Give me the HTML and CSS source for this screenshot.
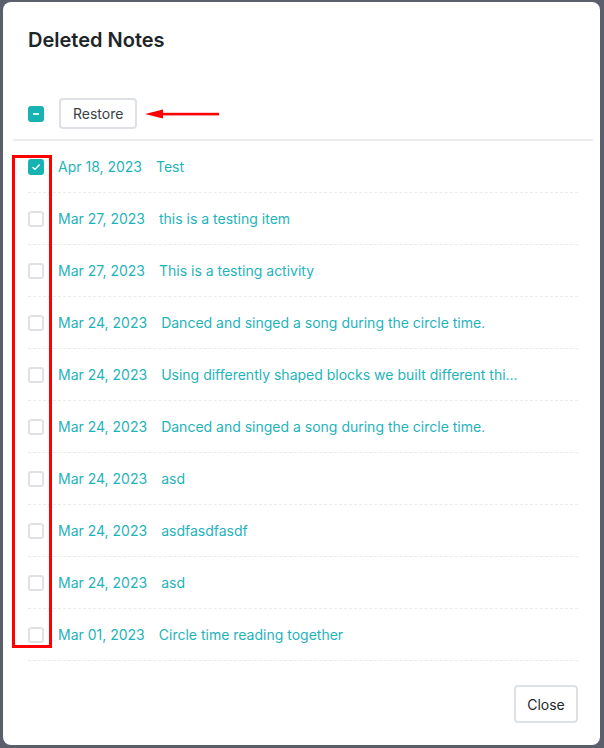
FILE: index.html
```html
<!DOCTYPE html>
<html lang="en">
<head>
    <meta charset="UTF-8">
    <meta name="viewport" content="width=device-width, initial-scale=1.0">
    <title>Deleted Notes</title>
    <link rel="stylesheet" href="styles.css">
</head>
<body>
    <div class="modal">
        <h2 class="modal-title">Deleted Notes</h2>

        <div class="toolbar">
            <span class="check check-partial"><span class="dash"></span></span>
            <button class="btn">Restore</button>
            <!-- callout arrow -->
            <svg class="arrow" width="76" height="10" viewBox="0 0 76 10">
                <polygon points="0,5 18,0.5 18,9.5" fill="#f00"/>
                <rect x="16" y="3.8" width="58" height="2.6" fill="#f00"/>
            </svg>
        </div>

        <div class="divider"></div>

        <ul class="notes">
            <li class="note">
                <span class="check check-on">
                    <svg width="10" height="8" viewBox="0 0 10 8"><path d="M1.5 4.2 L4 6.4 L8.6 1.6" fill="none" stroke="#fff" stroke-width="1.4"/></svg>
                </span>
                <span class="date">Apr 18, 2023</span>
                <span class="text">Test</span>
            </li>
            <li class="note">
                <span class="check"></span>
                <span class="date">Mar 27, 2023</span>
                <span class="text">this is a testing item</span>
            </li>
            <li class="note">
                <span class="check"></span>
                <span class="date">Mar 27, 2023</span>
                <span class="text">This is a testing activity</span>
            </li>
            <li class="note">
                <span class="check"></span>
                <span class="date">Mar 24, 2023</span>
                <span class="text">Danced and singed a song during the circle time.</span>
            </li>
            <li class="note">
                <span class="check"></span>
                <span class="date">Mar 24, 2023</span>
                <span class="text">Using differently shaped blocks we built different thi...</span>
            </li>
            <li class="note">
                <span class="check"></span>
                <span class="date">Mar 24, 2023</span>
                <span class="text">Danced and singed a song during the circle time.</span>
            </li>
            <li class="note">
                <span class="check"></span>
                <span class="date">Mar 24, 2023</span>
                <span class="text">asd</span>
            </li>
            <li class="note">
                <span class="check"></span>
                <span class="date">Mar 24, 2023</span>
                <span class="text">asdfasdfasdf</span>
            </li>
            <li class="note">
                <span class="check"></span>
                <span class="date">Mar 24, 2023</span>
                <span class="text">asd</span>
            </li>
            <li class="note">
                <span class="check"></span>
                <span class="date">Mar 01, 2023</span>
                <span class="text">Circle time reading together</span>
            </li>
        </ul>

        <div class="footer">
            <button class="btn btn-close">Close</button>
        </div>

        <!-- highlight box around the checkbox column -->
        <div class="highlight"></div>
    </div>
</body>
</html>
```

FILE: styles.css
```css
* {
    box-sizing: border-box;
}
body {
    margin: 0;
    background: #5b5e6b;
    font-family: Inter, "Noto Sans", sans-serif;
    height: 748px;
    overflow: hidden;
}
.modal {
    position: relative;
    margin: 2px 0 0 3px;
    width: 597px;
    height: 743px;
    background: #fff;
    border-radius: 8px;
}
.modal-title {
    margin: 0;
    padding: 25px 25px 0;
    font-size: 20px;
    line-height: 26px;
    font-weight: 600;
    color: #1d2528;
}
.toolbar {
    display: flex;
    align-items: center;
    padding: 45px 25px 0;
}
.toolbar .btn {
    margin-left: 15px;
}
.arrow {
    margin-left: 8px;
}
.divider {
    margin: 10px 7px 0 10px;
    height: 2px;
    background: #ececec;
}
.check {
    display: inline-flex;
    align-items: center;
    justify-content: center;
    width: 16px;
    height: 16px;
    border: 2px solid #dfe1e5;
    border-radius: 3px;
    flex-shrink: 0;
}
.check-on,
.check-partial {
    background: #17b3b3;
    border-color: #17b3b3;
}
.dash {
    width: 6px;
    height: 2px;
    background: #d9f3f3;
}
.btn {
    font-family: inherit;
    font-size: 14px;
    color: #3a3f44;
    background: #fff;
    border: 2px solid #dde0e5;
    border-radius: 4px;
    height: 31px;
    padding: 0 12px;
}
.notes {
    list-style: none;
    margin: 0;
    padding: 0 22px 0 25px;
}
.note {
    display: flex;
    align-items: center;
    height: 52px;
    border-bottom: 1px dashed #e9ebee;
    font-size: 14px;
    color: #1fb3ba;
    white-space: nowrap;
}
.note .date {
    margin-left: 14px;
}
.note .text {
    margin-left: 14px;
}
.footer {
    display: flex;
    justify-content: flex-end;
    padding: 24px 22px 0;
}
.btn-close {
    height: 38px;
    width: 64px;
    padding: 0;
    color: #22272b;
}
.highlight {
    position: absolute;
    left: 9px;
    top: 153px;
    width: 40px;
    height: 493px;
    border: 3px solid #f00;
}
```
